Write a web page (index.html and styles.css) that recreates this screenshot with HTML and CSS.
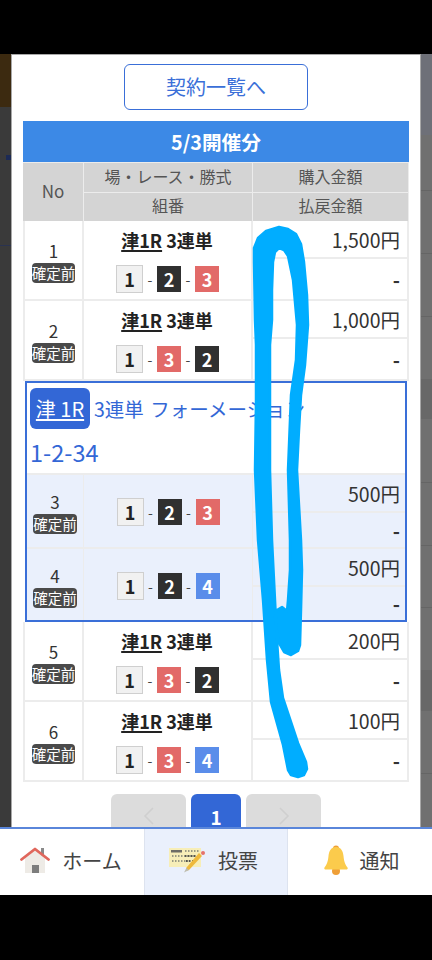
FILE: index.html
```html
<!DOCTYPE html>
<html lang="ja">
<head>
<meta charset="utf-8">
<title>投票</title>
<link rel="stylesheet" href="styles.css">
</head>
<body>
<div class="screen">
  <div class="black-top"></div>
  <div class="stage">
    <div class="strip strip-left"><span class="mark"></span><span class="mark-line"></span></div>
    <main class="modal">
      <div class="list-wrap"><a class="list-btn">契約一覧へ</a></div>
      <div class="date-bar">5/3開催分</div>
      <div class="thead">
        <div class="th th-no">No</div>
        <div class="th">場・レース・勝式</div>
        <div class="th">購入金額</div>
        <div class="th">組番</div>
        <div class="th">払戻金額</div>
      </div>

      <div class="row">
        <div class="c-no"><span class="num">1</span><span class="tag">確定前</span></div>
        <div class="c-main"><div class="race"><u>津1R</u> 3連単</div>
          <div class="combo"><b class="bk b1">1</b><i>-</i><b class="bk b2">2</b><i>-</i><b class="bk b3">3</b></div></div>
        <div class="c-amt"><div class="amt">1,500円</div><div class="pay">-</div></div>
      </div>
      <div class="row">
        <div class="c-no"><span class="num">2</span><span class="tag">確定前</span></div>
        <div class="c-main"><div class="race"><u>津1R</u> 3連単</div>
          <div class="combo"><b class="bk b1">1</b><i>-</i><b class="bk b3">3</b><i>-</i><b class="bk b2">2</b></div></div>
        <div class="c-amt"><div class="amt">1,000円</div><div class="pay">-</div></div>
      </div>

      <section class="formation">
        <div class="f-head">
          <div class="f-line"><span class="f-chip"><u>津 1R</u></span><span class="f-type">3連単 フォーメーション</span></div>
          <div class="f-nums">1-2-34</div>
        </div>
        <div class="row row-f">
          <div class="c-no"><span class="num">3</span><span class="tag">確定前</span></div>
          <div class="c-main"><div class="combo"><b class="bk b1">1</b><i>-</i><b class="bk b2">2</b><i>-</i><b class="bk b3">3</b></div></div>
          <div class="c-amt"><div class="amt">500円</div><div class="pay">-</div></div>
        </div>
        <div class="row row-f row-f2">
          <div class="c-no"><span class="num">4</span><span class="tag">確定前</span></div>
          <div class="c-main"><div class="combo"><b class="bk b1">1</b><i>-</i><b class="bk b2">2</b><i>-</i><b class="bk b4">4</b></div></div>
          <div class="c-amt"><div class="amt">500円</div><div class="pay">-</div></div>
        </div>
      </section>

      <div class="row">
        <div class="c-no"><span class="num">5</span><span class="tag">確定前</span></div>
        <div class="c-main"><div class="race"><u>津1R</u> 3連単</div>
          <div class="combo"><b class="bk b1">1</b><i>-</i><b class="bk b3">3</b><i>-</i><b class="bk b2">2</b></div></div>
        <div class="c-amt"><div class="amt">200円</div><div class="pay">-</div></div>
      </div>
      <div class="row">
        <div class="c-no"><span class="num">6</span><span class="tag">確定前</span></div>
        <div class="c-main"><div class="race"><u>津1R</u> 3連単</div>
          <div class="combo"><b class="bk b1">1</b><i>-</i><b class="bk b3">3</b><i>-</i><b class="bk b4">4</b></div></div>
        <div class="c-amt"><div class="amt">100円</div><div class="pay">-</div></div>
      </div>

      <nav class="pager">
        <span class="pg pg-arrow"><svg width="12" height="18" viewBox="0 0 12 18"><path d="M10 1 2 9l8 8" fill="none" stroke="#cfcfcf" stroke-width="1.5"/></svg></span>
        <span class="pg pg-on">1</span>
        <span class="pg pg-arrow"><svg width="12" height="18" viewBox="0 0 12 18"><path d="m2 1 8 8-8 8" fill="none" stroke="#cfcfcf" stroke-width="1.5"/></svg></span>
      </nav>
    </main>
    <div class="strip strip-right"></div>
  </div>

  <footer class="tabs">
    <a class="tab tab-home">
      <svg class="ic" width="30" height="27" viewBox="0 0 30 27">
        <path d="M21 1h3v9h-3z" fill="#8a8a8a"/>
        <path d="M5 11 15 3l10 8v15H5z" fill="#eeebe6"/>
        <path d="M12 18h7v8h-7z" fill="#7d7d7d"/>
        <path d="M1.500 12.500 15 2l13.500 10.500" fill="none" stroke="#e0675c" stroke-width="2.800" stroke-linecap="round" stroke-linejoin="round"/>
      </svg>
      <span>ホーム</span>
    </a>
    <a class="tab tab-on">
      <svg class="ic" width="38" height="26" viewBox="0 0 38 26">
        <path d="M1 1h32v19H1z" fill="#f7eeb8"/>
        <path d="M3 3h11v2.500H3z" fill="#6d6d66"/>
        <path d="M4 9h24M4 14h18M17 4h14" stroke="#9a9a84" stroke-width="2.200" stroke-dasharray="1.500 1.500" fill="none"/>
        <path d="M17 9h11M18 14h8" stroke="#55554c" stroke-width="2.200" stroke-dasharray="1.500 1.500" fill="none"/>
        <path d="M34 9 21 23l-3.500 1 1-3.500L31 6z" fill="#eeb93c"/>
        <path d="m18.500 21-2.500 4.500 5-2.500z" fill="#bdbdb0"/>
        <circle cx="35" cy="6" r="2" fill="#e6736b"/>
      </svg>
      <span>投票</span>
    </a>
    <a class="tab tab-bell">
      <svg class="ic" width="24" height="30" viewBox="0 0 24 30">
        <circle cx="12" cy="3.500" r="3" fill="#ef9f37"/>
        <circle cx="12" cy="26" r="4" fill="#ef9f37"/>
        <path d="M12 2c5 0 7 4 7.500 9 .5 6 2 9 4 11.500.6.900 0 2-1 2H1.500c-1 0-1.600-1.100-1-2C2.500 20 4 17 4.500 11 5 6 7 2 12 2z" fill="#fbcb4c"/>
      </svg>
      <span>通知</span>
    </a>
  </footer>
  <div class="black-bottom"></div>

  <svg class="scribble" width="432" height="960" viewBox="0 0 432 960">
    <path d="M279 227 288 229 296 234 301 244 304 262 307 295 308 325 305 365 301 395 299 430 297 470 301 540 302 570 301 610 300 645 298 651 291 655 284 652 280 645 277 632 275 617 277 610 282 607 287 611 288 600 290 570 290 540 288 470 290 420 291 395 296 360 297 325 293 280 288 256 284 250 279 248 275 252 273 262 272 290 272 320 270 345 270 400 270 470 272 540 275 600 277 640 279 670 283 698 298 743 306 762 307 769 304 775 298 777 291 775 288 770 283 745 271 702 267 660 263 600 258 540 255 470 256 400 256 345 255 320 254 262 254 248 258 238 266 231Z" fill="#00adff" stroke="#00adff" stroke-width="2.500" stroke-linejoin="round"/>
  </svg>
</div>
</body>
</html>
```

FILE: styles.css
```css
* { box-sizing: border-box; }
html, body { margin: 0; padding: 0; background: #000; }
body { font-family: "Noto Sans CJK JP", "Noto Sans", sans-serif; color: #333; }
u { text-underline-offset: 2px; text-decoration-thickness: 1.500px; }

.screen { position: relative; width: 432px; height: 960px; overflow: hidden; display: flex; flex-direction: column; background: #000; }
.black-top { height: 54px; flex: none; background: #000; }
.black-bottom { height: 65px; flex: none; background: #000; }

.stage { flex: none; height: 773px; display: flex; overflow: hidden; }
.strip { flex: none; }
.strip-left {
  width: 11px;
  position: relative;
  background: linear-gradient(#3c2a10 0 53px, #3a3a3a 53px);
}
.mark { position: absolute; left: 6px; top: 101px; width: 5px; height: 5px; background: #1c2a55; }
.mark-line { position: absolute; left: 0; top: 191px; width: 11px; height: 1px; background: #2a3350; }
.strip-right {
  width: 11px;
  background: linear-gradient(#6e7078 0 81px, #707070 81px 136px, #656565 136px 137px, #707070 137px 199px, #656565 199px 200px, #707070 200px 262px, #656565 262px 263px, #707070 263px 325px, #686868 325px 365px, #707070 365px 428px, #656565 428px 429px, #707070 429px 491px, #656565 491px 492px, #707070 492px 553px, #656565 553px 554px, #707070 554px 616px, #686868 616px 657px, #707070 657px 719px, #656565 719px 720px, #707070 720px);
}

.modal { flex: none; width: 410px; height: 773px; padding: 0 11px; background: #fff; border: solid #a8a8a8; border-width: 1px 1px 0; overflow: hidden; }

.list-wrap { display: flex; justify-content: center; padding-top: 9px; }
.list-btn { display: flex; align-items: center; justify-content: center; width: 184px; height: 46px; border: 1.500px solid #3a6fd8; border-radius: 6px; color: #3a6fd8; font-size: 20px; padding-bottom: 2px; }

.date-bar { margin-top: 11px; height: 41px; display: flex; align-items: center; justify-content: center; background: #3c89e6; color: #fff; font-size: 19.700px; font-weight: 700; }

.thead { display: grid; grid-template-columns: 61px 169px 156px; grid-template-rows: 30px 29px; background: #ececec; }
.th { display: flex; align-items: center; justify-content: center; background: #d4d4d4; color: #555; font-size: 16px; border: solid #ececec; border-width: 1px 1px 0 0; padding-bottom: 4px; }
.th-no { grid-row: 1 / 3; font-size: 17px; }

.row { display: grid; grid-template-columns: 59px 169px 154px; height: 80px; border: solid #ececec; border-width: 0 2px 2px; }
.c-no { display: flex; flex-direction: column; align-items: center; justify-content: center; padding-top: 2px; border-right: 2px solid #ececec; }
.num { font-size: 17px; line-height: 24px; height: 24px; color: #333; }
.tag { background: #4a4a4a; color: #fff; font-size: 14.500px; line-height: 20px; height: 20px; border-radius: 4px; white-space: nowrap; }
.c-main { display: flex; flex-direction: column; align-items: center; justify-content: center; gap: 12px; border-right: 2px solid #ececec; }
.race { font-size: 18px; font-weight: 700; color: #222; line-height: 26px; margin-right: 1px; }
.combo { display: flex; align-items: center; }
.combo i { font-style: normal; font-size: 14px; width: 14px; text-align: center; color: #444; }
.bk { display: flex; align-items: center; justify-content: center; width: 24px; height: 26px; font-size: 18px; font-weight: 700; }
.b1 { width: 27px; height: 28px; background: #f1f1f1; border: 1px solid #cfcfcf; color: #222; }
.b2 { background: #303030; color: #fff; }
.b3 { background: #e26a68; color: #fff; }
.b4 { background: #5a8dea; color: #fff; }

.c-amt { display: flex; flex-direction: column; }
.amt, .pay { display: flex; align-items: center; justify-content: flex-end; padding-right: 7px; font-size: 19.500px; color: #333; }
.amt { flex: none; height: 38px; border-bottom: 2px solid #ececec; }
.pay { flex: 1; font-weight: 700; }

.formation { height: 241px; width: 382px; margin-left: 2px; border: 2px solid #3a6fd8; }
.f-head { height: 90px; padding: 5px 3px 0; color: #3367d6; background: #fff; }
.f-line { display: flex; align-items: center; gap: 4px; font-size: 19.500px; height: 41px; word-spacing: 2px; }
.f-chip { display: flex; align-items: center; justify-content: center; width: 60px; height: 41px; background: #3367d6; color: #fff; border-radius: 6px; font-size: 20px; word-spacing: 0; }
.f-type { white-space: nowrap; }
.f-nums { font-size: 23.500px; line-height: 30px; margin-top: 8px; }
.row-f { height: 74px; background: #eaf0fc; border-width: 2px 0 0; grid-template-columns: 57px 169px 152px; }
.row-f2 { height: 73px; }
.row-f .amt, .row-f .pay { padding-right: 5px; }
.row-f .c-no, .row-f .c-main { border-right-width: 1px; }
.row-f .c-main { padding-top: 2px; }

.pager { display: flex; justify-content: center; gap: 5px; padding-top: 12px; }
.pg { display: flex; align-items: center; justify-content: center; height: 48px; border-radius: 6px 6px 0 0; padding-bottom: 4px; }
.pg-arrow { width: 75px; background: #dcdcdc; }
.pg-on { width: 50px; background: #3367d6; color: #fff; font-size: 19px; font-weight: 700; }

.tabs { flex: none; height: 68px; display: grid; grid-template-columns: 144px 144px 144px; background: #fff; border-top: 2px solid #5a86da; }
.tab { display: flex; align-items: center; justify-content: center; gap: 12px; font-size: 20px; color: #444; padding-bottom: 4px; }
.tab-home { padding-right: 2px; }
.tab-on { background: #eaf0fc; border: solid #dde3ef; border-width: 0 1px; padding-right: 6px; }
.tab-bell { padding-left: 3px; }
.ic { flex: none; }

.scribble { position: absolute; left: 0; top: 0; pointer-events: none; }
```
